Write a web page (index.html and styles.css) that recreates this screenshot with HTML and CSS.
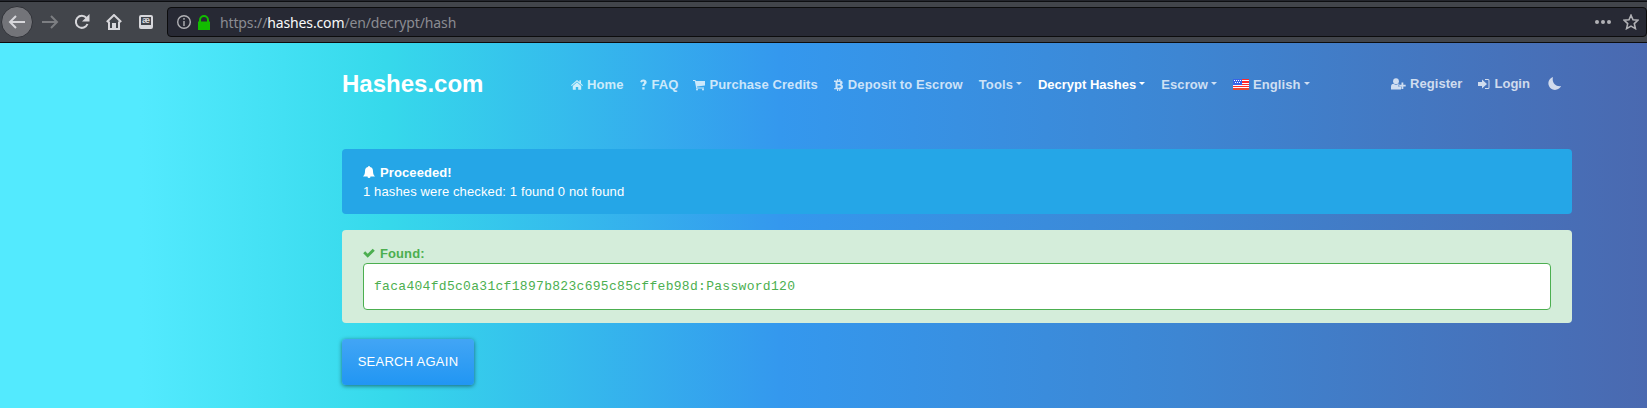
FILE: index.html
```html
<!DOCTYPE html>
<html lang="en">
<head>
<meta charset="utf-8">
<title>Hashes.com</title>
<link rel="stylesheet" href="styles.css">
</head>
<body>
<header class="browser">
  <div class="tools">
    <span class="back"><svg width="18" height="16" viewBox="0 0 18 16"><path d="M17 8H2M8 2L2 8l6 6"/></svg></span>
    <svg class="forward" width="18" height="16" viewBox="0 0 18 16"><path d="M1 8h15M10 2l6 6-6 6"/></svg>
    <svg class="reload" width="16" height="16" viewBox="0 0 16 16"><path d="M12.500 4A6 6 0 1 0 13.500 10"/><path class="solid" d="M15.500 0v7.500H8z"/></svg>
    <svg class="house" width="16" height="16" viewBox="0 0 16 16"><path d="M.8 8L8 1l7.200 7M3 7.500V15h10V7.500"/><path class="solid" d="M6 15V9h4v6z"/></svg>
    <span class="reader">æ</span>
  </div>
  <div class="address">
    <svg class="info" width="14" height="14" viewBox="0 0 14 14"><circle cx="7" cy="7" r="6.300"/><path d="M7 6v5M7 3v1.700"/></svg>
    <svg class="lock" width="12" height="15" viewBox="0 0 12 15"><path d="M0 6.500h1V5a5 5 0 0 1 10 0v1.500h1V15H0zM3 6.500h6V5a3 3 0 0 0-6 0z"/></svg>
    <span class="url">https://<b>hashes.com</b>/en/decrypt/hash</span>
    <svg class="dots" width="16" height="4" viewBox="0 0 16 4"><circle cx="2" cy="2" r="2"/><circle cx="8" cy="2" r="2"/><circle cx="14" cy="2" r="2"/></svg>
    <svg class="star" width="16" height="16" viewBox="0 0 16 16"><path d="M8 1.200l2 4.500 5 .5-3.700 3.400 1.100 5L8 12.100l-4.400 2.500 1.100-5L1 6.200l5-.5z"/></svg>
  </div>
</header>
<main class="page">
  <nav class="nav">
    <a class="brand">Hashes.com</a>
    <ul class="menu">
      <li class="item home"><svg width="12" height="12" viewBox="0 0 12 12"><path d="M6 1L0 6.200l.7.8L6 2.400 11.300 7l.7-.8-2-1.800V1.200H8.400V3z"/><path d="M6 3.300L1.800 7v3.700h3V8h2.400v2.700h3V7z"/></svg><span>Home</span></li>
      <li class="item faq"><svg width="7" height="12" viewBox="0 0 7 12"><path d="M.2 3C.5 1.300 1.700.5 3.300.5c2 0 3.400 1.100 3.400 2.800 0 2-2.100 2.200-2.100 3.700H2.300c0-2.200 1.800-2.400 1.800-3.500 0-.6-.4-.9-.9-.9-.6 0-.9.400-1.300 1zM2.300 8.200h2.300v2.200H2.300z"/></svg><span>FAQ</span></li>
      <li class="item credits"><svg width="12" height="12" viewBox="0 0 12 12"><path d="M0 1h2.500l.3 1H12v4.500L4 7.600l.2.900H11v1H3.300L1.800 2H0z"/><circle cx="4" cy="10.500" r="1"/><circle cx="10" cy="10.500" r="1"/></svg><span>Purchase Credits</span></li>
      <li class="item deposit"><svg width="9" height="12" viewBox="0 0 9 12"><path fill-rule="evenodd" d="M0 1.500h3V0h1.200v1.500h1V0h1.200v1.600C8 1.800 8.700 2.700 8.600 4c0 .8-.5 1.400-1.200 1.700 1.100.3 1.700 1 1.600 2.200-.1 1.500-1 2.200-2.600 2.400V12H5.200v-1.700h-1V12H3v-1.700H0l.3-1.400h1.200V3H0zM3.500 3v2.100h1.200c2.200 0 2.200-2.100 0-2.100zm0 3.400v2.400H5c2.400 0 2.400-2.400 0-2.400z"/></svg><span>Deposit to Escrow</span></li>
      <li class="item caret"><span>Tools</span></li>
      <li class="item caret active"><span>Decrypt Hashes</span></li>
      <li class="item caret"><span>Escrow</span></li>
      <li class="item caret english"><svg class="flag" width="16" height="11" viewBox="0 0 16 11"><path fill="#fff" d="M0 0h16v11H0z"/><path fill="#ff2b2b" d="M0 0h16v1H0zM8 2h8v2H8zM8 5h8v1H8zM0 7h16v1H0z"/><path fill="#e8472f" d="M0 9h16v2H0z"/><path fill="#3763e8" d="M0 0h9v6H0z"/><path fill="#fff" d="M1 1h1v1H1zM3 1h1v1H3zM5 1h1v1H5zM7 1h1v1H7zM2 3h1v1H2zM4 3h1v1H4zM6 3h1v1H6z"/></svg><span>English</span></li>
    </ul>
    <ul class="account">
      <li class="item register"><svg width="15" height="12" viewBox="0 0 15 12"><circle cx="5" cy="3.200" r="2.900"/><path d="M0 11.500V9c0-2 1-3.200 2.600-3.200 1.500 1.200 3.300 1.200 4.800 0 .6 0 1 .1 1.400.5H7.500v2.500H10v2.700zM10.500 4.500h1.800v2.300h2.400v1.800h-2.400V11h-1.800V8.600H8.200V6.800h2.300z"/></svg><span>Register</span></li>
      <li class="item login"><svg width="12" height="12" viewBox="0 0 12 12"><path d="M0 4h4V1.500l5 4.500-5 4.500V8H0zM7 1h3q1.500 0 1.500 1.500v7Q11.500 11 10 11H7v-1h3q.5 0 .5-.5v-7Q10.500 2 10 2H7z"/></svg><span>Login</span></li>
      <li class="item moon"><svg width="13" height="13" viewBox="0 0 13 13"><path d="M5 0a6.600 6.600 0 1 0 8 9C8 10 3.500 6 5 0z"/></svg></li>
    </ul>
  </nav>
  <section class="alert notice">
    <div class="title"><svg width="12" height="13" viewBox="0 0 12 13"><path d="M6 0q1 0 1 1.100C9.400 1.600 10 3.400 10 5.200c0 2.800.8 4 2 5.300H7.500a1.500 1.500 0 0 1-3 0H0c1.200-1.300 2-2.500 2-5.300 0-1.800.6-3.600 3-4.100Q5 0 6 0z"/></svg><strong>Proceeded!</strong></div>
    <div class="detail">1 hashes were checked: 1 found 0 not found</div>
  </section>
  <section class="alert found">
    <div class="title"><svg width="12" height="13" viewBox="0 0 12 13"><path d="M.2 6.200l2-2L4.700 6.700l5-5 2.100 2-7.100 7.100z"/></svg><strong>Found:</strong></div>
    <div class="result">faca404fd5c0a31cf1897b823c695c85cffeb98d:Password120</div>
  </section>
  <button class="again">SEARCH AGAIN</button>
</main>
</body>
</html>
```

FILE: styles.css
```css
* { box-sizing: border-box; }
body { margin: 0; height: 408px; overflow: hidden; display: flex; flex-direction: column; font: 13px/19px "Liberation Sans", Arial, sans-serif; }
ul { margin: 0; padding: 0; list-style: none; }
svg { display: block; flex: none; fill: currentColor; }

.browser { height: 43px; flex: none; display: flex; padding-top: 7px; background: linear-gradient(#23252c 0 1px, #0d0e11 1px 2px, #42454b 2px); border-bottom: 1px solid #0c0c0d; color: #d7d7db; }
.tools { width: 167px; flex: none; height: 30px; display: flex; align-items: center; }
.tools svg { fill: none; stroke: currentColor; stroke-width: 2; }
.tools .solid { fill: currentColor; stroke: none; }
.back { width: 32px; height: 32px; margin-left: 1px; border: 1px solid #303238; border-radius: 50%; background: #737479; display: grid; place-items: center; }
.forward { margin-left: 8px; color: #7c7e82; }
.reload { margin-left: 15px; }
.house { margin-left: 16px; }
.reader { width: 14px; height: 14px; margin-left: 17px; border: 2px solid #d7d7db; border-bottom-width: 4px; border-radius: 2px; font: bold 9px/7px "Liberation Sans", sans-serif; text-align: center; display: flex; justify-content: center; }
.address { flex: 1; height: 30px; display: flex; align-items: center; padding-left: 9px; padding-right: 7px; border: 1px solid #0c0c0d; border-radius: 4px; background: #272934; color: #b1b1b5; }
.info { fill: none; stroke: currentColor; stroke-width: 1.400; }
.lock { margin-left: 7px; color: #12bc00; }
.url { margin-left: 10px; padding-top: 1px; font: 14px/20px "Noto Sans", sans-serif; letter-spacing: -.13px; color: #8b8c92; }
.url b { font-weight: 400; color: #f9f9fa; }
.dots { margin-left: auto; }
.star { margin-left: 12px; fill: none; stroke: currentColor; stroke-width: 1.600; }

.page { flex: 1; padding: 0 75px 0 342px; background: linear-gradient(90deg, #53eafe 0, #53eafe 140px, #36d9eb 385px, #3498ee 780px, #3d86d3 1180px, #4a69b0 1647px); }
.nav { height: 106px; padding-top: 27px; display: flex; align-items: flex-start; color: rgba(255,255,255,.75); font-weight: 700; letter-spacing: .09px; }
.brand { width: 229px; flex: none; font-size: 24px; line-height: 28px; letter-spacing: 0; color: #fff; }
.menu, .account { display: flex; }
.menu { padding-top: 5px; }
.account { margin-left: auto; padding-top: 4px; letter-spacing: .04px; }
.item { display: flex; align-items: center; gap: 4px; margin-right: 16px; white-space: nowrap; }
.faq svg { margin-left: 1px; }
.faq { margin-right: 15px; }
.deposit { gap: 5px; }
.caret::after { content: ""; border: 3px solid transparent; border-top-color: currentColor; border-bottom: 0; margin: -2px 0 0 -1px; }
.active { color: #fff; }
.active.caret { letter-spacing: 0; }
.english .flag { shape-rendering: crispEdges; margin-top: -1px; }
.moon { margin: 0 11px 0 2px; }

.alert { border-radius: 4px; padding: 14px 21px 0; margin-bottom: 16px; letter-spacing: .13px; }
.title { display: flex; align-items: center; gap: 5px; height: 19px; letter-spacing: .1px; }
.title svg { margin-top: -1px; }
.notice { height: 65px; background: #25a6e7; color: #fff; }
.found { height: 93px; background: #d4edda; color: #4caf50; }
.result { height: 47px; border: 1px solid #4caf50; border-radius: 4px; padding-left: 10px; background: #fff; font: 13px/46px "Liberation Mono", monospace; letter-spacing: .3px; }
.again { display: block; width: 132px; height: 46px; padding: 0 0 2px; border: 0; border-radius: 4px; background: linear-gradient(#42a5f5, #2196f3); color: #fff; font: 13px "Liberation Sans", sans-serif; letter-spacing: .26px; box-shadow: 0 1px 4px rgba(0,0,0,.5); }
```
